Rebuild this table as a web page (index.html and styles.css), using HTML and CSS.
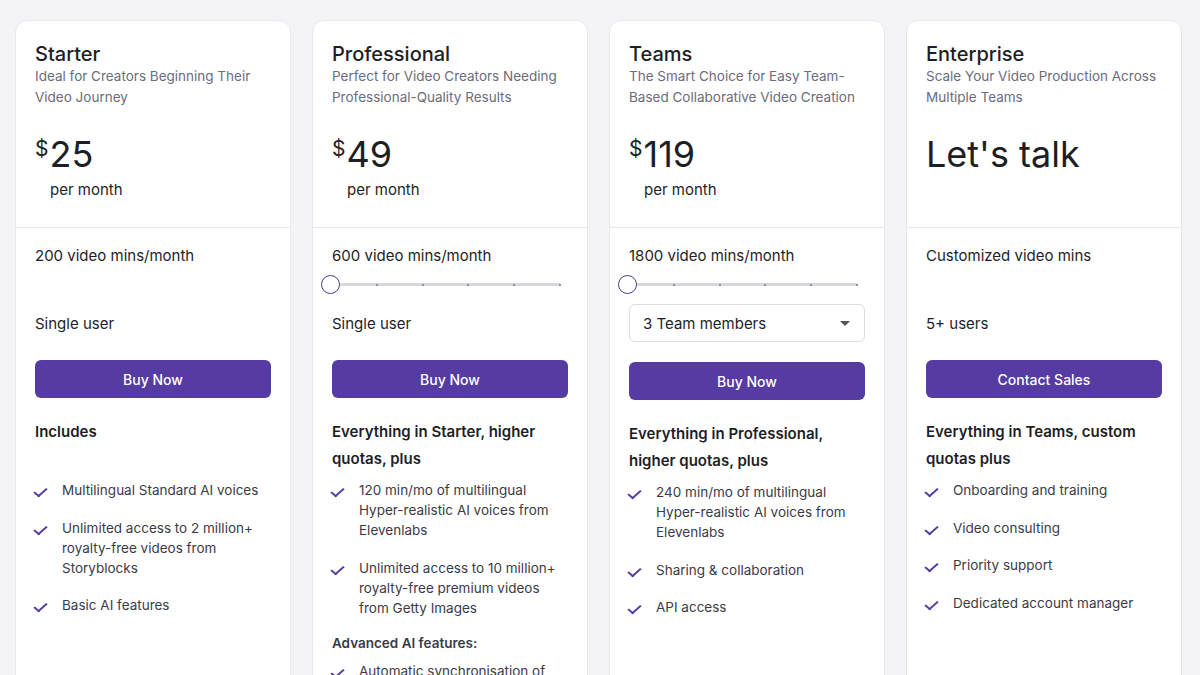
FILE: index.html
```html
<!DOCTYPE html>
<html lang="en">
<head>
  <meta charset="UTF-8">
  <title>Pricing</title>
  <link rel="stylesheet" href="styles.css">
</head>
<body>
  <div class="plans">

    <div class="plan">
      <div class="plan-head">
        <h2 class="plan-name">Starter</h2>
        <p class="plan-desc">Ideal for Creators Beginning Their Video Journey</p>
        <div class="price"><span class="cur">$</span><span class="amount">25</span></div>
        <div class="period">per month</div>
      </div>
      <div class="plan-body">
        <div class="mins">200 video mins/month</div>
        <div class="slider-spacer"></div>
        <div class="users">Single user</div>
        <button class="buy">Buy Now</button>
        <h3 class="feat-title">Includes</h3>
        <ul class="feats">
          <li>Multilingual Standard AI voices</li>
          <li>Unlimited access to 2 million+ royalty-free videos from Storyblocks</li>
          <li>Basic AI features</li>
        </ul>
      </div>
    </div>

    <div class="plan">
      <div class="plan-head">
        <h2 class="plan-name">Professional</h2>
        <p class="plan-desc">Perfect for Video Creators Needing Professional-Quality Results</p>
        <div class="price"><span class="cur">$</span><span class="amount">49</span></div>
        <div class="period">per month</div>
      </div>
      <div class="plan-body">
        <div class="mins">600 video mins/month</div>
        <div class="slider">
          <div class="track">
            <i></i><i></i><i></i><i></i><i></i><i></i>
          </div>
          <span class="thumb"></span>
        </div>
        <div class="users">Single user</div>
        <button class="buy">Buy Now</button>
        <h3 class="feat-title">Everything in Starter, higher quotas, plus</h3>
        <ul class="feats">
          <li>120 min/mo of multilingual Hyper-realistic AI voices from Elevenlabs</li>
          <li>Unlimited access to 10 million+ royalty-free premium videos from Getty Images</li>
        </ul>
        <h4 class="feat-sub">Advanced AI features:</h4>
        <ul class="feats">
          <li>Automatic synchronisation of voiceover and visuals</li>
        </ul>
      </div>
    </div>

    <div class="plan">
      <div class="plan-head">
        <h2 class="plan-name">Teams</h2>
        <p class="plan-desc">The Smart Choice for Easy Team-Based Collaborative Video Creation</p>
        <div class="price"><span class="cur">$</span><span class="amount">119</span></div>
        <div class="period">per month</div>
      </div>
      <div class="plan-body">
        <div class="mins">1800 video mins/month</div>
        <div class="slider">
          <div class="track">
            <i></i><i></i><i></i><i></i><i></i><i></i>
          </div>
          <span class="thumb"></span>
        </div>
        <div class="users">
          <div class="select">
            <span>3 Team members</span>
            <span class="caret"></span>
          </div>
        </div>
        <button class="buy buy-low">Buy Now</button>
        <h3 class="feat-title">Everything in Professional, higher quotas, plus</h3>
        <ul class="feats">
          <li>240 min/mo of multilingual Hyper-realistic AI voices from Elevenlabs</li>
          <li>Sharing &amp; collaboration</li>
          <li>API access</li>
        </ul>
      </div>
    </div>

    <div class="plan">
      <div class="plan-head">
        <h2 class="plan-name">Enterprise</h2>
        <p class="plan-desc">Scale Your Video Production Across Multiple Teams</p>
        <div class="price"><span class="amount">Let's talk</span></div>
      </div>
      <div class="plan-body">
        <div class="mins">Customized video mins</div>
        <div class="slider-spacer"></div>
        <div class="users">5+ users</div>
        <button class="buy">Contact Sales</button>
        <h3 class="feat-title">Everything in Teams, custom quotas plus</h3>
        <ul class="feats">
          <li>Onboarding and training</li>
          <li>Video consulting</li>
          <li>Priority support</li>
          <li>Dedicated account manager</li>
        </ul>
      </div>
    </div>

  </div>
</body>
</html>
```

FILE: styles.css
```css
:root {
  --bg-color: #f4f4f6;
  --card-color: #ffffff;
  --border-color: #e7e7ee;
  --primary-color: #563ba2;
  --text-color: #1e1e26;
  --muted-color: #6c6c7c;
  --list-color: #3b3b48;
}

body {
  font-family: Inter, 'Noto Sans', sans-serif;
  background: var(--bg-color);
  margin: 0;
  color: var(--text-color);
  height: 675px;
  overflow: hidden;
}

.plans {
  display: grid;
  grid-template-columns: repeat(4, 276px);
  gap: 21px;
  padding: 20px 0 0 15px;
}

.plan {
  background: var(--card-color);
  border: 1px solid var(--border-color);
  border-radius: 12px;
  min-height: 720px;
}

.plan-head {
  box-sizing: border-box;
  height: 207px;
  padding: 21px 19px 0;
  border-bottom: 1px solid var(--border-color);
}

.plan-name {
  margin: 0;
  font-size: 20px;
  font-weight: 500;
  line-height: 24px;
}

.plan-desc {
  margin: 0;
  font-size: 13.5px;
  line-height: 21px;
  color: var(--muted-color);
}

.price {
  display: flex;
  align-items: flex-start;
  margin-top: 24px;
}

.cur {
  font-size: 21px;
  line-height: 20px;
  margin-top: 7px;
  margin-right: 1px;
}

.amount {
  font-size: 36px;
  line-height: 44px;
  font-weight: 400;
}

.period {
  margin: 3px 0 0 15px;
  font-size: 15px;
  line-height: 22px;
}

.plan-body {
  padding: 17px 19px 0;
}

.mins {
  font-size: 15px;
  line-height: 22px;
}

.slider-spacer {
  height: 18px;
  margin-top: 8px;
}

.slider {
  position: relative;
  height: 18px;
  margin: 8px 0 0 -11px;
  width: 240px;
}

.track {
  position: absolute;
  left: 9px;
  right: 0;
  top: 8px;
  height: 3px;
  border-radius: 2px;
  background: #d7d7de;
  display: flex;
  justify-content: space-between;
  align-items: center;
}

.track i {
  width: 2px;
  height: 2px;
  border-radius: 50%;
  background: #7a7a88;
}

.thumb {
  position: absolute;
  left: 0;
  top: 0;
  box-sizing: border-box;
  width: 19px;
  height: 19px;
  border: 1.5px solid #4a3c8c;
  border-radius: 50%;
  background: #fff;
}

.users {
  display: flex;
  align-items: center;
  height: 38px;
  margin-top: 11px;
  font-size: 15px;
}

.select {
  flex: 1;
  height: 38px;
  box-sizing: border-box;
  border: 1px solid #dcdce3;
  border-radius: 6px;
  padding: 0 14px 0 13px;
  display: flex;
  align-items: center;
  justify-content: space-between;
  font-size: 15px;
}

.caret {
  width: 0;
  height: 0;
  border-left: 5px solid transparent;
  border-right: 5px solid transparent;
  border-top: 5px solid #555;
}

.buy {
  display: block;
  width: 100%;
  height: 38px;
  margin-top: 18px;
  background: var(--primary-color);
  color: white;
  border: none;
  border-radius: 6px;
  font-family: inherit;
  font-size: 14px;
  font-weight: 500;
}

.buy-low {
  margin-top: 20px;
}

.feat-title {
  margin: 20px 0 0;
  min-height: 54px;
  font-size: 15px;
  line-height: 27px;
  font-weight: 600;
}

.feats {
  list-style: none;
  margin: 8px 0 0;
  padding: 0;
}

.feats li {
  position: relative;
  padding-left: 27px;
  margin-bottom: 17.5px;
  font-size: 13.5px;
  line-height: 20px;
  color: var(--list-color);
}

.feats li::before {
  content: "";
  position: absolute;
  left: 2px;
  top: 5px;
  width: 5px;
  height: 10px;
  border-right: 2px solid var(--primary-color);
  border-bottom: 2px solid var(--primary-color);
  transform: rotate(40deg) skewX(-8deg);
}

.feat-sub {
  margin: -2px 0 0;
  font-size: 13.5px;
  line-height: 20px;
  font-weight: 600;
  color: var(--list-color);
}
```
